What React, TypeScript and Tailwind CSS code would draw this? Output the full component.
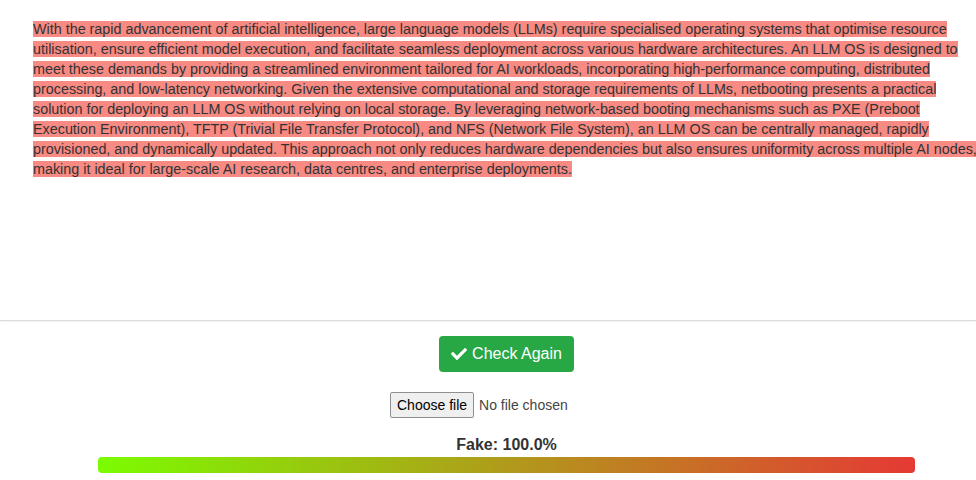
import React from 'react';
import { FaCheck } from 'react-icons/fa';

const passage =
  'With the rapid advancement of artificial intelligence, large language models (LLMs) require specialised operating systems that optimise resource utilisation, ensure efficient model execution, and facilitate seamless deployment across various hardware architectures. An LLM OS is designed to meet these demands by providing a streamlined environment tailored for AI workloads, incorporating high-performance computing, distributed processing, and low-latency networking. Given the extensive computational and storage requirements of LLMs, netbooting presents a practical solution for deploying an LLM OS without relying on local storage. By leveraging network-based booting mechanisms such as PXE (Preboot Execution Environment), TFTP (Trivial File Transfer Protocol), and NFS (Network File System), an LLM OS can be centrally managed, rapidly provisioned, and dynamically updated. This approach not only reduces hardware dependencies but also ensures uniformity across multiple AI nodes, making it ideal for large-scale AI research, data centres, and enterprise deployments.';

export default function App() {
  const fake = 100.0;

  return (
    <div className="w-[976px] h-[480px] overflow-hidden bg-white text-[#333] font-['Liberation_Sans',Arial,sans-serif]">
      {/* Analysed text */}
      <div className="h-[321px] border-b border-[#dcdcdc] shadow-[0_1px_2px_rgba(0,0,0,0.06)]">
        <p className="w-[949px] pl-[33px] pt-[19px] text-[14.35px] leading-[20px] box-content">
          <span className="bg-[#f88a84]">{passage}</span>
        </p>
      </div>

      {/* Controls */}
      <div className="pl-[37px] flex flex-col items-center">
        <button className="mt-[15px] h-[36px] px-3 flex items-center gap-[5px] bg-[#28a745] text-white text-[16px] rounded-[4px]">
          <FaCheck className="w-[16px] h-[16px]" />
          Check Again
        </button>

        <label className="mt-[20px] w-[233px] h-[26px] flex items-center gap-[5px] text-[14px] cursor-pointer">
          <input type="file" className="hidden" />
          <span className="h-[26px] px-[6px] flex items-center border border-[#8f8f8f] bg-[#efefef] text-black rounded-[2px]">
            Choose file
          </span>
          <span className="text-[#444]">No file chosen</span>
        </label>

        <div className="mt-[17px] text-[16px] font-bold leading-[20px]">Fake: {fake.toFixed(1)}%</div>

        <div className="mt-[2px] w-[817px] h-[16px] rounded-[4px] bg-linear-to-r/srgb from-[#7cfc00] to-[#e53935]" />
      </div>
    </div>
  );
}
